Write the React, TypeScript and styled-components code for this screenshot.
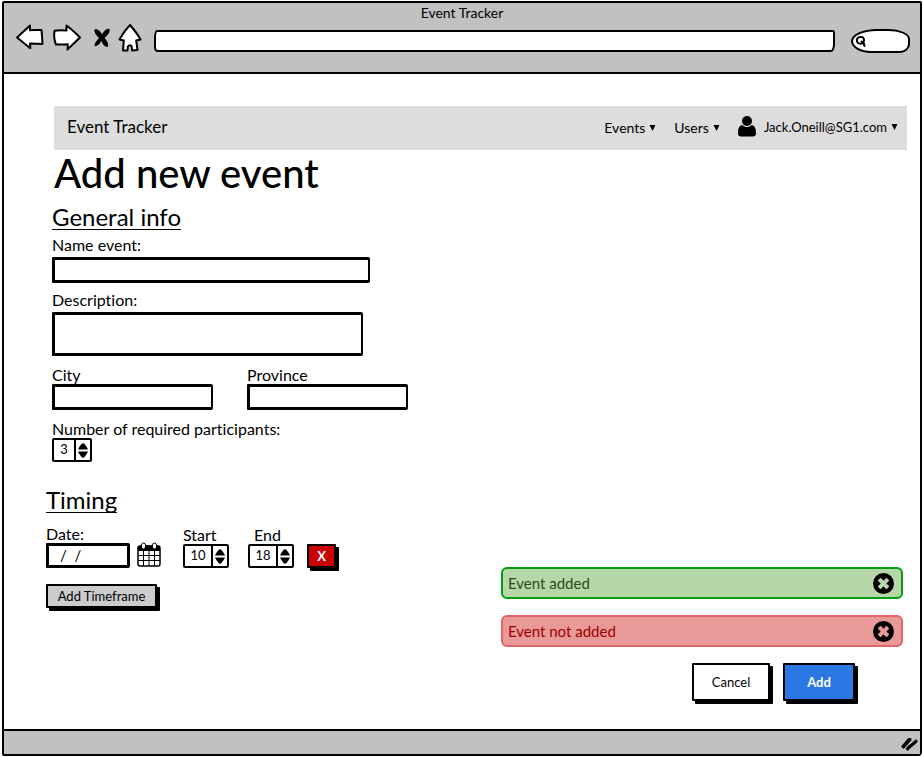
import React, { useState } from "react";
import styled, { createGlobalStyle, css } from "styled-components";

const GlobalStyle = createGlobalStyle`
  *, *::before, *::after { box-sizing: border-box; }
  body { margin: 0; background: #fff; color: #000; font-family: Lato, "Open Sans", sans-serif; font-size: 16px; font-variant-ligatures: none; }
  button, input, textarea { font: inherit; color: inherit; margin: 0; }
  h1, h2, p { margin: 0; font-weight: 400; }
`;

const Browser = styled.div`
  display: flex;
  flex-direction: column;
  min-height: 100vh;
  padding: 1px 1px 1px 2px;
`;

const Frame = styled.div`
  display: flex;
  flex: 1;
  flex-direction: column;
  border: 2px solid #000;
  border-radius: 2px 2px 4px 2px;
`;

const Chrome = styled.header`
  display: flex;
  flex-direction: column;
  height: 71px;
  background: #c1c1c1;
  border-bottom: 2px solid #000;
`;

const WindowTitle = styled.p`
  font-size: 14px;
  line-height: 19px;
  text-align: center;
`;

const Toolbar = styled.div`
  display: flex;
  align-items: center;
  height: 32px;
  padding: 0 10px 0 11px;
`;

const ToolButton = styled.button<{ $gap: number }>`
  display: flex;
  flex: none;
  padding: 0;
  margin-right: ${(p) => p.$gap}px;
  border: 0;
  background: none;
  cursor: pointer;
`;

const Address = styled.input`
  flex: 1;
  min-width: 0;
  height: 22px;
  margin: 6px 16px 0 0;
  padding: 0 6px;
  font-size: 13px;
  background: #fff;
  border: 2px solid #000;
  border-radius: 3px 2px 4px 3px / 8px 4px 8px 5px;
`;

const SearchBox = styled.label`
  display: flex;
  flex: none;
  align-items: center;
  width: 59px;
  height: 24px;
  margin-top: 6px;
  padding-left: 2px;
  background: #fff;
  border: 2px solid #000;
  border-radius: 26px 22px 10px 20px / 12px 10px 9px 12px;

  input {
    width: 38px;
    padding: 0;
    border: 0;
    outline: 0;
    background: none;
    font-size: 12px;
  }
`;

const Page = styled.main`
  display: flex;
  flex: 1;
  flex-direction: column;
  padding: 32px 13px 0 42px;
`;

const NavBar = styled.nav`
  display: flex;
  align-items: center;
  height: 44px;
  margin-left: 8px;
  padding: 0 9px 0 13px;
  background: #ddd;
`;

const Brand = styled.a`
  flex: 1;
  margin-bottom: 3px;
  color: inherit;
  font-size: 17px;
  text-decoration: none;
`;

const NavItem = styled.button<{ $gap?: number }>`
  display: flex;
  align-items: center;
  gap: 4px;
  margin-right: ${(p) => p.$gap ?? 0}px;
  padding: 0;
  border: 0;
  background: none;
  font-size: 14px;
  line-height: 18px;
  cursor: pointer;
`;

const Account = styled(NavItem)`
  margin-bottom: 3px;
  font-size: 13px;
  > svg:first-child { margin-right: 4px; }
`;

const Title = styled.h1`
  margin-left: 8px;
  font-size: 40px;
  font-weight: 500;
  line-height: 46px;
`;

const Columns = styled.div`
  display: flex;
  flex: 1;
  justify-content: space-between;
`;

const Form = styled.form`
  display: flex;
  flex-direction: column;
  align-items: flex-start;
  padding-top: 9px;
`;

const Section = styled.section<{ $inset?: boolean }>`
  display: flex;
  flex-direction: column;
  align-items: flex-start;
  margin-bottom: ${(p) => (p.$inset ? 26 : 16)}px;
  padding-left: ${(p) => (p.$inset ? 6 : 0)}px;
`;

const SectionTitle = styled.h2<{ $space: number }>`
  border-bottom: 1px solid #000;
  margin-bottom: ${(p) => p.$space}px;
  font-size: 24px;
  line-height: 24px;
`;

const Field = styled.div<{ $space?: number }>`
  display: flex;
  flex-direction: column;
  align-items: flex-start;
  margin-bottom: ${(p) => p.$space ?? 0}px;
`;

const Label = styled.label<{ $indent?: boolean; $tight?: boolean }>`
  margin-left: ${(p) => (p.$indent ? 6 : 0)}px;
  margin-bottom: ${(p) => (p.$tight ? 0 : 3)}px;
  line-height: 18px;
`;

const sketchBorder = css`
  background: #fff;
  border: 3px solid #000;
  border-width: 3px 2px 3px 3px;
  border-radius: 1px 2px 2px 1px;
`;

const TextInput = styled.input<{ $width: number }>`
  ${sketchBorder}
  width: ${(p) => p.$width}px;
  height: 26px;
  padding: 0 6px;
`;

const DateInput = styled(TextInput)`
  height: 25px;
  padding: 0 0 2px 11px;
  border-width: 3px;
  font-size: 15px;
  white-space: pre;
`;

const TextArea = styled.textarea`
  ${sketchBorder}
  display: block;
  width: 311px;
  height: 44px;
  padding: 2px 6px;
  resize: none;
`;

const FieldRow = styled.div<{ $gap: number }>`
  display: flex;
  align-items: flex-end;
  gap: ${(p) => p.$gap}px;
`;

const Stepper = styled.div<{ $wide?: boolean }>`
  display: flex;
  width: ${(p) => (p.$wide ? 46 : 40)}px;
  height: 24px;
  border: 2px solid #000;
  border-radius: 2px;
  background: #fff;

  input {
    flex: 1;
    min-width: 0;
    padding: 0 0 2px;
    border: 0;
    outline: 0;
    background: none;
    font-size: 13px;
    text-align: center;
  }
`;

const Steps = styled.div`
  display: flex;
  flex-direction: column;
  justify-content: center;
  gap: 1px;
  padding: 0 2px;
  border-left: 2px solid #000;

  button {
    display: flex;
    padding: 0;
    border: 0;
    background: none;
    cursor: pointer;
  }
`;

type Tone = "plain" | "grey" | "red" | "blue";
const tones: Record<Tone, string> = { plain: "#fff", grey: "#ccc", red: "#c00", blue: "#2b78e4" };

const Button = styled.button<{ $tone: Tone; $width: number; $height: number }>`
  width: ${(p) => p.$width}px;
  height: ${(p) => p.$height}px;
  padding: 0;
  border: 2px solid #000;
  border-radius: 1px;
  background: ${(p) => tones[p.$tone]};
  box-shadow: 3px 3px 0 #000;
  color: ${(p) => (p.$tone === "red" || p.$tone === "blue" ? "#fff" : "#000")};
  font-size: 13px;
  font-weight: ${(p) => (p.$tone === "red" || p.$tone === "blue" ? 700 : 400)};
  line-height: 18px;
  cursor: pointer;
`;

const Aside = styled.div`
  display: flex;
  flex: 0 1 402px;
  flex-direction: column;
  align-self: flex-end;
  gap: 16px;
  margin-right: 4px;
  padding-bottom: 28px;
`;

const Alert = styled.div<{ $ok?: boolean }>`
  display: flex;
  align-items: center;
  justify-content: space-between;
  height: 32px;
  padding: 0 7px 0 5px;
  border: 2px solid ${(p) => (p.$ok ? "#009e0f" : "#e06666")};
  border-radius: 6px;
  background: ${(p) => (p.$ok ? "#b6d7a8" : "#ea9999")};
  color: ${(p) => (p.$ok ? "#274e13" : "#900")};
  font-size: 15px;

  button {
    display: flex;
    padding: 0;
    border: 0;
    background: none;
    cursor: pointer;
  }
`;

const Actions = styled.div`
  display: flex;
  justify-content: flex-end;
  gap: 13px;
  padding-right: 48px;
`;

const StatusBar = styled.footer`
  display: flex;
  align-items: center;
  justify-content: flex-end;
  height: 25px;
  padding: 3px 2px 0 0;
  border-top: 2px solid #000;
  background: #c1c1c1;
`;

const Caret = () => (
  <svg width="7" height="6" viewBox="0 0 7 6" aria-hidden="true">
    <path d="M.5 0h6L3.5 6z" />
  </svg>
);

const outline = { fill: "#fff", stroke: "#000", strokeWidth: 2, strokeLinejoin: "round" as const };

const BackIcon = () => (
  <svg width="30" height="28" viewBox="0 0 30 28" aria-hidden="true">
    <path d="M2 13.500 15 1.500v4.700c4 0 7-.3 11.500-.1.500 5 .8 9 1 14l-12.500-.5.4 4.500C11 21 6 16.500 2 13.500z" {...outline} />
  </svg>
);

const ForwardIcon = () => (
  <svg width="30" height="28" viewBox="0 0 30 28" aria-hidden="true">
    <path d="M2.500 6.800c3.500-.7 7.500-.6 12-.3L14.500 1.500c5 3.500 9 7.500 13.500 12L15.500 25.500l.3-5.200c-4.500.3-8 .4-11.800.2-1.700-4-2.200-9-1.500-13.700z" {...outline} />
  </svg>
);

const StopIcon = () => (
  <svg width="18" height="22" viewBox="0 0 18 22" aria-hidden="true">
    <path d="M1.500 2.500C5 1 8 5 9 7.500 11 4 13.500 1 16.500 2c1 3-2 6.500-5 9 2.500 2.500 4 5.500 3.700 8.500-3.400 1-5.400-2-6.700-5.500-2 3-4.200 5.500-6.700 5.200-.7-3 2-5.700 4.200-8.200C3.500 8.500 1 5.500 1.500 2.500z" />
  </svg>
);

const HomeIcon = () => (
  <svg width="24" height="29" viewBox="0 0 24 29" aria-hidden="true">
    <path d="M12 1C15.500 5 19.500 10 22.500 15.500l-4.300 1 1.300 9.500-5.300.5-.7-4.500c-1.300-1-2.700-.8-3.700.5l-.3 4L5 26.500 5.800 16.500l-4.300-1C4.500 10 8 5 12 1z" {...outline} />
  </svg>
);

const SearchIcon = () => (
  <svg width="12" height="13" viewBox="0 0 12 13" aria-hidden="true">
    <path d="M8.500 7.500C10 3 8 1.800 5.500 2 2.500 2.200 1.500 4 2 6.500c.5 2.300 4.500 3 6.500 1M6.500 6.500c1.500.8 2.500 2 3 4.500" fill="none" stroke="#000" strokeWidth="2" strokeLinecap="round" />
  </svg>
);

const UserIcon = () => (
  <svg width="18" height="21" viewBox="0 0 18 21" aria-hidden="true">
    <circle cx="9" cy="5" r="5" />
    <path d="M4.500 9C6.800 11.700 11.200 11.700 13.500 9 16.800 9.500 18 12.500 18 17.500 18 19.500 16.800 20.500 15 20.500H3C1.200 20.500 0 19.500 0 17.500 0 12.500 1.200 9.500 4.500 9z" />
  </svg>
);

const CalendarIcon = () => (
  <svg width="24" height="26" viewBox="0 0 24 26" aria-hidden="true">
    <rect x="1" y="4" width="22" height="20" rx="2" fill="#fff" stroke="#000" strokeWidth="1.500" />
    <path d="M1 5q0-1.500 2-1.500h18q2 0 2 1.500v4H1z" />
    <path d="M6.500 9v15M12 9v15M17.500 9v15M1 13.500h22M1 18.500h22" stroke="#000" fill="none" />
    <rect x="4.500" y="1" width="4" height="6" rx="2" fill="#fff" stroke="#000" />
    <rect x="15.500" y="1" width="4" height="6" rx="2" fill="#fff" stroke="#000" />
  </svg>
);

const StepArrow = ({ down }: { down?: boolean }) => (
  <svg width="10" height="7" viewBox="0 0 10 7" aria-hidden="true">
    <path d={down ? "M0 .5h10Q9 3 6.500 6 5 7.500 3.500 6 1 3 0 .5z" : "M0 6.500h10Q9 4 6.500 1 5-.5 3.500 1 1 4 0 6.500z"} />
  </svg>
);

const CloseIcon = ({ color }: { color: string }) => (
  <svg width="21" height="21" viewBox="0 0 21 21" aria-hidden="true">
    <circle cx="10.500" cy="10.500" r="10.500" />
    <path d="m7.500 7.500 6 6m0-6-6 6" stroke={color} strokeWidth="4" strokeLinecap="square" />
  </svg>
);

const GripIcon = () => (
  <svg width="17" height="14" viewBox="0 0 17 14" aria-hidden="true">
    <path d="M2 9.500 8 2.500M2.500 10 9 2.500M6.500 12 15 4M7 11l8-6.500" stroke="#000" strokeWidth="3" strokeLinecap="round" />
  </svg>
);

function NumberStepper({ id, initial, wide }: { id: string; initial: number; wide?: boolean }) {
  const [value, setValue] = useState(initial);
  return (
    <Stepper $wide={wide}>
      <input id={id} inputMode="numeric" value={value} onChange={(e) => setValue(Number(e.target.value) || 0)} />
      <Steps>
        <button type="button" aria-label="Increase" onClick={() => setValue(value + 1)}>
          <StepArrow />
        </button>
        <button type="button" aria-label="Decrease" onClick={() => setValue(value - 1)}>
          <StepArrow down />
        </button>
      </Steps>
    </Stepper>
  );
}

export default function App() {
  return (
    <Browser>
      <GlobalStyle />
      <Frame>
        <Chrome>
          <WindowTitle>Event Tracker</WindowTitle>
          <Toolbar>
            <ToolButton $gap={7} aria-label="Back"><BackIcon /></ToolButton>
            <ToolButton $gap={11} aria-label="Forward"><ForwardIcon /></ToolButton>
            <ToolButton $gap={7} aria-label="Stop"><StopIcon /></ToolButton>
            <ToolButton $gap={12} aria-label="Home"><HomeIcon /></ToolButton>
            <Address aria-label="Address" />
            <SearchBox>
              <SearchIcon />
              <input aria-label="Search" />
            </SearchBox>
          </Toolbar>
        </Chrome>

        <Page>
          <NavBar>
            <Brand href="#">Event Tracker</Brand>
            <NavItem $gap={18}>Events <Caret /></NavItem>
            <NavItem $gap={18}>Users <Caret /></NavItem>
            <Account><UserIcon />Jack.Oneill@SG1.com <Caret /></Account>
          </NavBar>
          <Title>Add new event</Title>

          <Columns>
            <Form id="event-form" onSubmit={(e) => e.preventDefault()}>
              <Section $inset>
                <SectionTitle $space={6}>General info</SectionTitle>
                <Field $space={8}>
                  <Label htmlFor="name">Name event:</Label>
                  <TextInput id="name" $width={318} />
                </Field>
                <Field $space={10}>
                  <Label htmlFor="description">Description:</Label>
                  <TextArea id="description" />
                </Field>
                <FieldRow $gap={34}>
                  <Field $space={10}>
                    <Label htmlFor="city" $tight>City</Label>
                    <TextInput id="city" $width={161} />
                  </Field>
                  <Field $space={10}>
                    <Label htmlFor="province" $tight>Province</Label>
                    <TextInput id="province" $width={161} />
                  </Field>
                </FieldRow>
                <Field>
                  <Label htmlFor="participants" $tight>Number of required participants:</Label>
                  <NumberStepper id="participants" initial={3} />
                </Field>
              </Section>

              <Section>
                <SectionTitle $space={12}>Timing</SectionTitle>
                <FieldRow $gap={13}>
                  <FieldRow $gap={7}>
                    <Field>
                      <Label htmlFor="date" $tight>Date:</Label>
                      <DateInput id="date" $width={84} defaultValue="/  /" />
                    </Field>
                    <ToolButton type="button" $gap={9} aria-label="Pick a date"><CalendarIcon /></ToolButton>
                  </FieldRow>
                  <FieldRow $gap={19}>
                    <Field>
                      <Label htmlFor="start" $tight>Start</Label>
                      <NumberStepper id="start" initial={10} wide />
                    </Field>
                    <Field>
                      <Label htmlFor="end" $indent $tight>End</Label>
                      <NumberStepper id="end" initial={18} wide />
                    </Field>
                  </FieldRow>
                  <Button type="button" aria-label="Remove timeframe" $tone="red" $width={29} $height={24}>X</Button>
                </FieldRow>
              </Section>
              <Button type="button" $tone="grey" $width={111} $height={24}>Add Timeframe</Button>
            </Form>

            <Aside>
              <Alert $ok role="status">
                Event added
                <button type="button" aria-label="Dismiss"><CloseIcon color="#b6d7a8" /></button>
              </Alert>
              <Alert role="alert">
                Event not added
                <button type="button" aria-label="Dismiss"><CloseIcon color="#ea9999" /></button>
              </Alert>
              <Actions>
                <Button type="button" $tone="plain" $width={78} $height={38}>Cancel</Button>
                <Button type="submit" form="event-form" $tone="blue" $width={72} $height={38}>Add</Button>
              </Actions>
            </Aside>
          </Columns>
        </Page>

        <StatusBar><GripIcon /></StatusBar>
      </Frame>
    </Browser>
  );
}
